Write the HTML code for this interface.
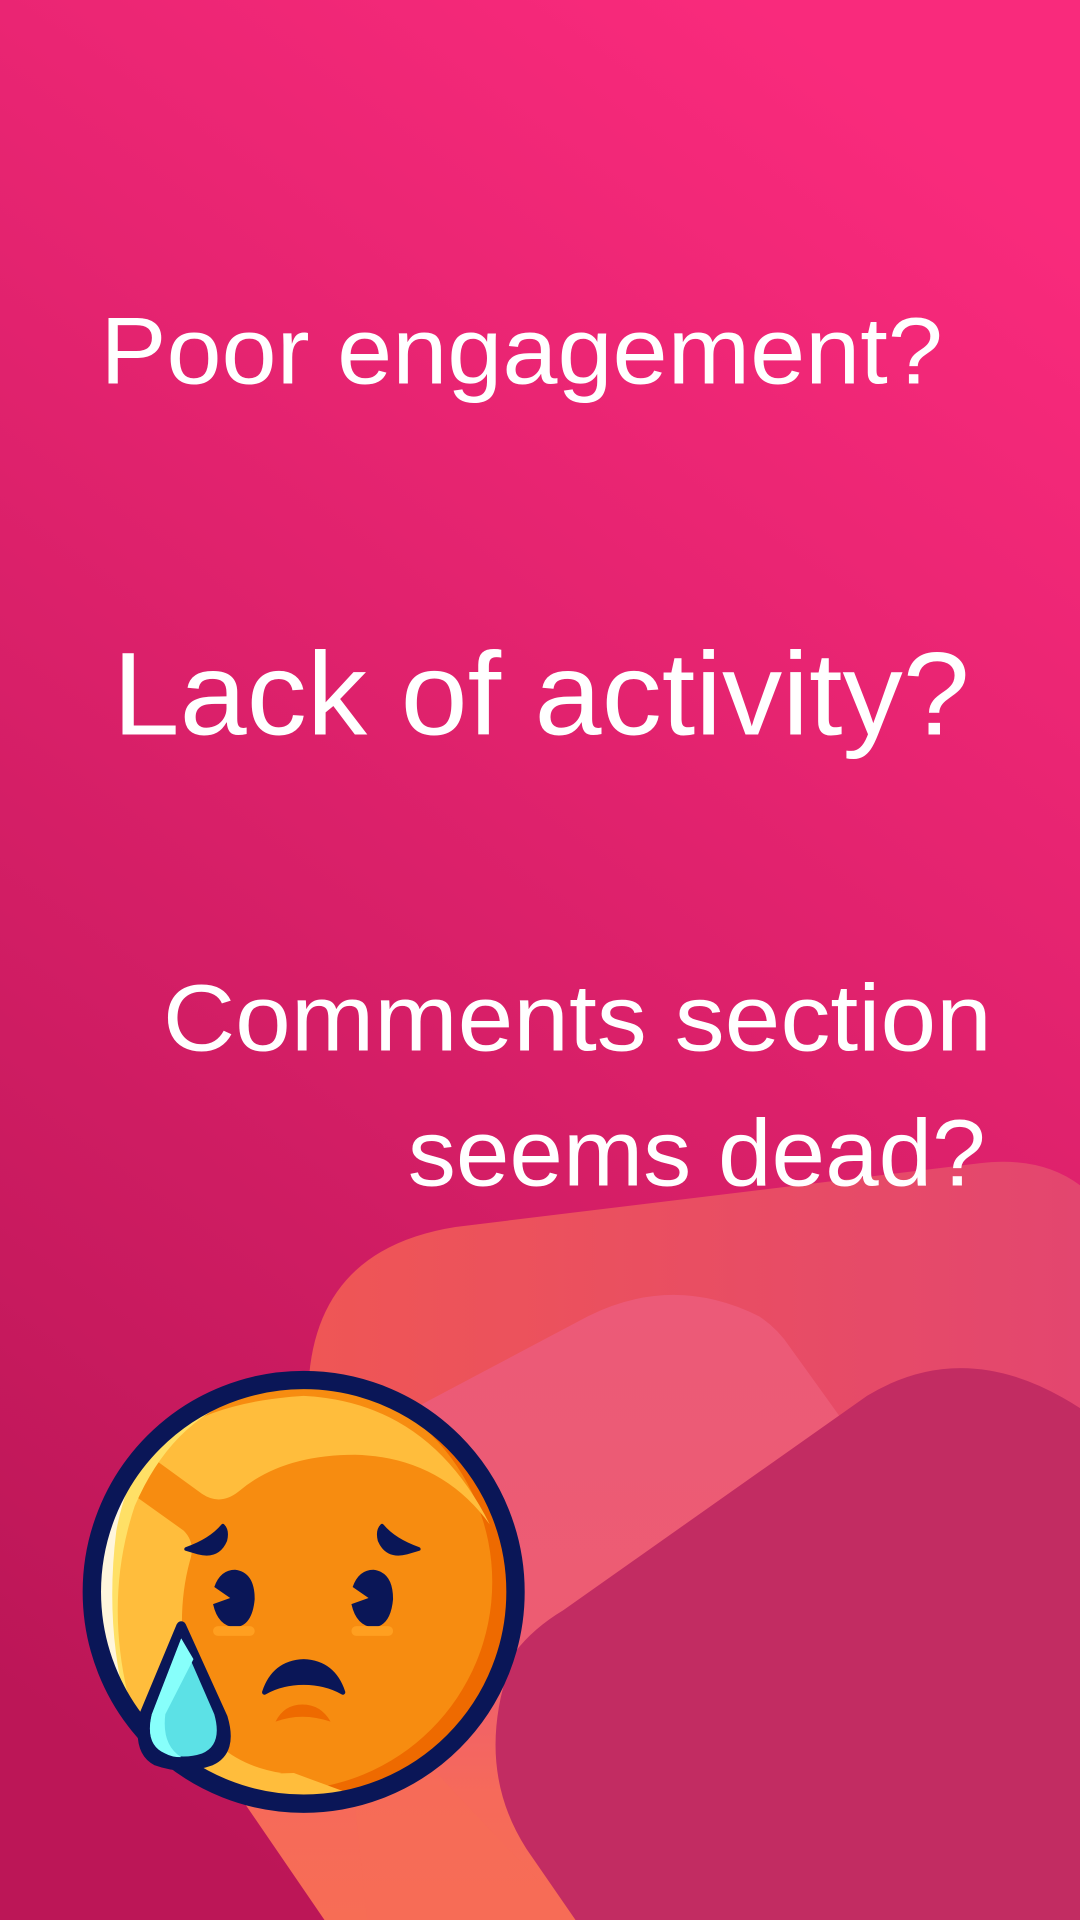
<!DOCTYPE html>
<html><head><meta charset="utf-8"><style>
html,body{margin:0;padding:0;width:1080px;height:1920px;overflow:hidden}
svg{display:block}
text{font-family:"Liberation Sans",sans-serif;fill:#fff;font-weight:normal}
</style></head><body>
<svg width="1080" height="1920" viewBox="0 0 882 1568" preserveAspectRatio="none" xmlns="http://www.w3.org/2000/svg">
<defs>
<linearGradient id="bg" x1="0.7" y1="0" x2="0.3" y2="1">
<stop offset="0" stop-color="#f92a7c"/><stop offset="1" stop-color="#bc1657"/></linearGradient>
<linearGradient id="ga" x1="0" y1="0" x2="1" y2="0">
<stop offset="0" stop-color="#ef5655"/><stop offset="1" stop-color="#e3466f"/></linearGradient>
<linearGradient id="gb" x1="0" y1="0" x2="0" y2="1">
<stop offset="0" stop-color="#ec5a78"/><stop offset="0.55" stop-color="#ed5c72"/><stop offset="0.8" stop-color="#f66a5a"/><stop offset="1" stop-color="#f76d55"/></linearGradient>
<clipPath id="face"><circle cx="248" cy="1300" r="166"/></clipPath>
</defs>
<rect width="882" height="1568" fill="url(#bg)"/>
<path d="M372,1002 L800,950 Q850,944 882,968 L882,1568 L300,1568 L252,1130 Q258,1020 372,1002 Z" fill="url(#ga)"/>
<path d="M480,1075 Q550,1040 620,1075 Q635,1085 645,1100 L882,1430 L882,1568 L265,1568 L150,1400 L150,1250 Z" fill="url(#gb)"/>
<path d="M300,1568 L285,1430 L330,1420 L470,1568 Z" fill="#f76d57" opacity="0.6"/>
<path d="M708,1140 Q790,1090 882,1150 L882,1568 L470,1568 L430,1510 Q385,1440 420,1350 Q435,1330 460,1315 Z" fill="#c22c62"/>
<text x="82" y="313" font-size="77" textLength="688" lengthAdjust="spacingAndGlyphs">Poor engagement?</text>
<text x="92" y="600" font-size="96" textLength="700" lengthAdjust="spacingAndGlyphs">Lack of activity?</text>
<text x="133" y="858" font-size="77" textLength="677" lengthAdjust="spacingAndGlyphs">Comments section</text>
<text x="333" y="968" font-size="77" textLength="472" lengthAdjust="spacingAndGlyphs">seems dead?</text>
<circle cx="248" cy="1300" r="176" fill="#0a1657"/>
<g clip-path="url(#face)">
<rect x="70" y="1120" width="360" height="360" fill="#ee6a00"/>
<circle cx="232" cy="1292" r="170" fill="#f78c10"/>
<path d="M80,1300 Q80,1150 248,1140 Q350,1145 400,1245 Q360,1190 290,1188 Q230,1188 195,1218 Q180,1230 165,1220 L110,1180 Z" fill="#ffbd3c"/>
<path d="M80,1200 L150,1250 Q160,1260 155,1275 Q140,1330 160,1400 Q180,1440 230,1448 L130,1470 L80,1470 Z" fill="#ffbd3c"/>
<path d="M80,1470 L80,1150 Q150,1140 200,1140 Q140,1160 110,1230 Q80,1320 115,1420 Z" fill="#ffe066"/>
<path d="M80,1420 L80,1160 Q120,1135 170,1140 Q110,1170 95,1250 Q85,1330 105,1400 Z" fill="#fff6dc"/>
<path d="M160,1440 Q200,1450 240,1448 L300,1470 L150,1470 Z" fill="#ffbd3c"/>
</g>
<circle cx="248" cy="1300" r="173" fill="none" stroke="#0a1657" stroke-width="15"/>
<path d="M152,1265 Q172,1258 182,1246 Q186,1250 184,1258 Q178,1272 162,1268 Z" fill="#0a1657" stroke="#0a1657" stroke-width="3" stroke-linejoin="round"/>
<path d="M342,1265 Q322,1258 312,1246 Q308,1250 310,1258 Q316,1272 332,1268 Z" fill="#0a1657" stroke="#0a1657" stroke-width="3" stroke-linejoin="round"/>
<path d="M175,1296 Q180,1282 192,1282 Q208,1284 208,1306 Q206,1328 192,1329 Q178,1328 174,1310 L188,1305 Z" fill="#0a1657"/>
<path d="M288,1296 Q293,1282 305,1282 Q321,1284 321,1306 Q319,1328 305,1329 Q291,1328 287,1310 L301,1305 Z" fill="#0a1657"/>
<rect x="174" y="1328" width="34" height="8" rx="4" fill="#ff9f20"/>
<rect x="287" y="1328" width="34" height="8" rx="4" fill="#ff9f20"/>
<path d="M216,1382 Q224,1358 248,1357 Q272,1358 280,1382 Q266,1374 248,1374 Q230,1374 216,1382 Z" fill="#0a1657" stroke="#0a1657" stroke-width="4" stroke-linejoin="round"/>
<path d="M225,1406 Q232,1392 247,1392 Q262,1392 270,1406 Q258,1402 247,1402 Q236,1402 225,1406 Z" fill="#ee6a00"/>
<path d="M148,1328 L182,1403 Q190,1430 172,1438 Q150,1446 128,1438 Q112,1430 118,1400 Z" fill="#0a1657" stroke="#0a1657" stroke-width="8" stroke-linejoin="round"/>
<path d="M148,1338 L175,1400 Q182,1425 165,1432 Q150,1437 135,1432 Q118,1425 124,1400 Z" fill="#5ce1e6"/>
<path d="M148,1338 L124,1400 Q118,1425 135,1432 Q140,1435 148,1435 Q132,1425 135,1400 L158,1355 Z" fill="#87fffb"/>
</svg>
</body></html>
